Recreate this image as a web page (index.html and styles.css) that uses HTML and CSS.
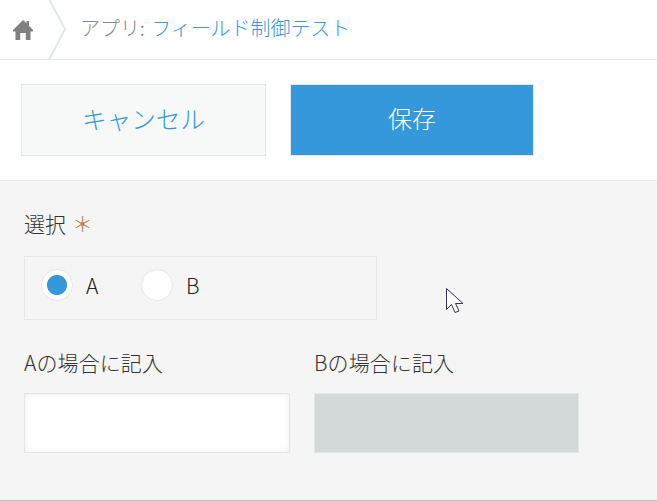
FILE: index.html
```html
<!DOCTYPE html>
<html lang="ja">
<head>
  <meta charset="UTF-8">
  <meta name="viewport" content="width=device-width, initial-scale=1.0">
  <title>フィールド制御テスト</title>
  <link rel="stylesheet" href="styles.css">
</head>
<body>
  <header class="breadcrumb">
    <a class="home-link" href="#">
      <svg width="22" height="22" viewBox="0 0 22 22">
        <path fill="#808080" d="M11 1 L14.5 4.3 V2 H17 V6.8 L21 11 V12.4 H18.5 V21 H13.8 V14 H8.2 V21 H3.5 V12.4 H1 V11 Z"/>
      </svg>
    </a>
    <svg class="crumb-sep" width="20" height="59" viewBox="0 0 20 59">
      <path fill="none" stroke="#e3e9e9" stroke-width="2" d="M1 -1 L17 29 L1 60"/>
    </svg>
    <span class="crumb-text">アプリ: <a class="crumb-link" href="#">フィールド制御テスト</a></span>
  </header>

  <div class="toolbar">
    <button class="btn btn-cancel" type="button">キャンセル</button>
    <button class="btn btn-save" type="button">保存</button>
  </div>

  <main class="form-body">
    <div class="field-label">選択 <span class="required">＊</span></div>
    <div class="radio-group">
      <label class="radio-item"><span class="radio checked"></span>A</label>
      <label class="radio-item"><span class="radio"></span>B</label>
    </div>

    <div class="field-row">
      <div class="field">
        <div class="field-label">Aの場合に記入</div>
        <input class="text-input" type="text">
      </div>
      <div class="field">
        <div class="field-label">Bの場合に記入</div>
        <input class="text-input disabled" type="text" disabled>
      </div>
    </div>
  </main>

  <svg class="cursor" width="20" height="30" viewBox="0 0 20 30">
    <path fill="#fff" stroke="#33334a" stroke-width="1" d="M1.5 1.5 V22.5 L6.5 17.5 L10 25.5 L14 24 L10.5 16.5 H18 Z"/>
  </svg>
</body>
</html>
```

FILE: styles.css
```css
* {
  box-sizing: border-box;
}
body {
  margin: 0;
  height: 501px;
  overflow: hidden;
  position: relative;
  background-color: #fff;
  color: #333;
  font-family: "Noto Sans CJK JP", "Liberation Sans", sans-serif;
  font-weight: 300;
}
a {
  color: #3498db;
  text-decoration: none;
}
.breadcrumb {
  display: flex;
  align-items: center;
  height: 60px;
  border-bottom: 1px solid #e3e7e8;
}
.home-link {
  display: flex;
  width: 48px;
  padding-left: 12px;
}
.crumb-sep {
  flex: none;
  margin-bottom: 1px;
}
.crumb-text {
  margin: 0 0 4px 12px;
  font-size: 20px;
  letter-spacing: -0.05px;
  color: #888;
}
.crumb-link {
  margin-left: 2px;
}
.toolbar {
  display: flex;
  gap: 24px;
  height: 121px;
  padding: 24px 0 0 21px;
  border-bottom: 1px solid #e3e7e8;
}
.btn {
  width: 245px;
  height: 72px;
  font-family: inherit;
  font-size: 24.6px;
  font-weight: 300;
  border: 1px solid #e3e7e8;
  padding: 0 0 5px;
}
.btn-cancel {
  background-color: #f7f9f9;
  color: #3498db;
}
.btn-save {
  width: 244px;
  background-color: #3498db;
  color: #fff;
  font-size: 24px;
}
.form-body {
  height: 320px;
  padding: 28px 24px 0;
  background-color: #f5f5f5;
  border-bottom: 1px solid #bbb;
}
.field-label {
  font-size: 21px;
  letter-spacing: 0.1px;
  line-height: 28px;
  color: #333;
}
.required {
  color: #b8762f;
  font-size: 21px;
  line-height: 20px;
  margin-left: 1px;
}
.radio-group {
  display: flex;
  align-items: center;
  width: 353px;
  height: 64px;
  margin-top: 19px;
  padding: 0 0 7px 16px;
  border: 1px solid #e3e7e8;
}
.radio-item {
  display: flex;
  align-items: center;
  width: 100px;
  font-size: 21px;
  color: #222;
}
.radio {
  width: 32px;
  height: 32px;
  margin-right: 13px;
  border: 1px solid #e3e7e8;
  border-radius: 50%;
  background-color: #fff;
}
.radio.checked {
  background: radial-gradient(circle, #3498db 9.6px, #fff 10.4px);
}
.field-row {
  display: flex;
  gap: 24px;
  margin-top: 28px;
}
.field {
  width: 266px;
}
.text-input {
  display: block;
  width: 100%;
  height: 60px;
  margin-top: 17px;
  border: 1px solid #e3e7e8;
  background-color: #fff;
  box-shadow: inset 0 0 6px rgba(0, 0, 0, 0.08);
}
.text-input.disabled {
  width: 265px;
  background-color: #d3d8d9;
  box-shadow: none;
}
.cursor {
  position: absolute;
  left: 445px;
  top: 287px;
}
```
